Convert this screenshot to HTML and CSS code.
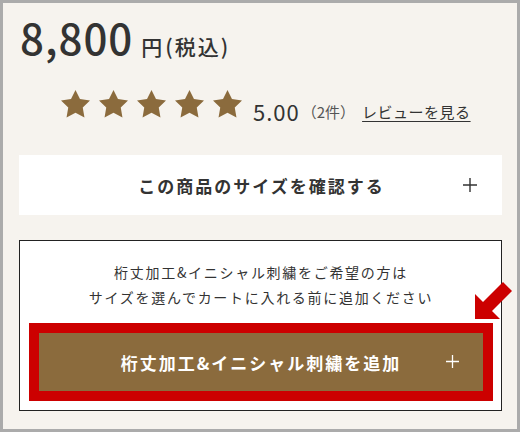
FILE: index.html
```html
<!DOCTYPE html>
<html lang="ja">
<head>
<meta charset="utf-8">
<link rel="stylesheet" href="styles.css">
</head>
<body>
<div class="frame">
  <div class="price">
    <span class="amount">8,800</span><span class="yen">円</span><span class="tax">(税込)</span>
  </div>
  <div class="rating">
    <div class="stars">
      <svg class="star" viewBox="2 2 20 19.3"><path d="M12 2l3.09 6.26L22 9.27l-5 4.87 1.18 6.88L12 17.77l-6.18 3.25L7 14.14 2 9.27l6.91-1.01L12 2z"/></svg>
      <svg class="star" viewBox="2 2 20 19.3"><path d="M12 2l3.09 6.26L22 9.27l-5 4.87 1.18 6.88L12 17.77l-6.18 3.25L7 14.14 2 9.27l6.91-1.01L12 2z"/></svg>
      <svg class="star" viewBox="2 2 20 19.3"><path d="M12 2l3.09 6.26L22 9.27l-5 4.87 1.18 6.88L12 17.77l-6.18 3.25L7 14.14 2 9.27l6.91-1.01L12 2z"/></svg>
      <svg class="star" viewBox="2 2 20 19.3"><path d="M12 2l3.09 6.26L22 9.27l-5 4.87 1.18 6.88L12 17.77l-6.18 3.25L7 14.14 2 9.27l6.91-1.01L12 2z"/></svg>
      <svg class="star" viewBox="2 2 20 19.3"><path d="M12 2l3.09 6.26L22 9.27l-5 4.87 1.18 6.88L12 17.77l-6.18 3.25L7 14.14 2 9.27l6.91-1.01L12 2z"/></svg>
    </div>
    <span class="score">5.00</span><span class="count">（2件）</span><a class="review" href="#">レビューを見る</a>
  </div>
  <div class="size-btn">
    <span class="size-label">この商品のサイズを確認する</span>
    <svg class="plus" viewBox="0 0 14 14"><path d="M7 0V14M0 7H14"/></svg>
  </div>
  <div class="custom">
    <p class="note">桁丈加工&amp;イニシャル刺繍をご希望の方は<br>サイズを選んでカートに入れる前に追加ください</p>
    <div class="highlight">
      <div class="add-btn">
        <span class="add-label">桁丈加工&amp;イニシャル刺繍を追加</span>
        <svg class="plus plus-white" viewBox="0 0 14 14"><path d="M7 0V14M0 7H14"/></svg>
      </div>
    </div>
    <svg class="arrow" viewBox="0 0 44 42"><polygon points="3,38 3,13 11,21 31,1 40,10 20,30 28,38"/></svg>
  </div>
</div>
</body>
</html>
```

FILE: styles.css
```css
body {
  margin: 0;
}

.frame {
  width: 520px;
  height: 432px;
  box-sizing: border-box;
  border: 3px solid #ababab;
  background: #f6f3ee;
  padding: 0 15px 0 16px;
  font-family: "Noto Sans CJK JP", sans-serif;
  color: #333;
}

.price {
  display: flex;
  align-items: baseline;
  padding-top: 13px;
  height: 42px;
  line-height: 42px;
}

.amount {
  font-size: 42px;
  font-weight: 500;
  letter-spacing: 1px;
  margin-left: 1px;
}

.yen {
  font-size: 21px;
  font-weight: 500;
  margin-left: 8px;
}

.tax {
  font-size: 21px;
  font-weight: 500;
  margin-left: 3px;
  letter-spacing: 2px;
}

.rating {
  display: flex;
  align-items: flex-end;
  margin-top: 33px;
  padding-left: 42px;
  height: 31px;
}

.stars {
  display: flex;
  gap: 9px;
  margin-bottom: 4px;
}

.star {
  width: 29px;
  height: 28px;
  fill: #8b6b3d;
  display: block;
}

.score {
  font-size: 22px;
  line-height: 22px;
  margin-left: 11px;
  letter-spacing: 1px;
}

.count {
  font-size: 15px;
  line-height: 20px;
  color: #555;
  margin-left: 2px;
}

.review {
  font-size: 15px;
  line-height: 20px;
  color: #333;
  margin-left: 7px;
  letter-spacing: 0.5px;
  text-decoration: underline;
  text-underline-offset: 3px;
}

.size-btn {
  position: relative;
  margin-top: 33px;
  height: 60px;
  background: #fff;
  display: flex;
  align-items: center;
  justify-content: center;
}

.size-label {
  font-size: 17px;
  font-weight: 700;
  letter-spacing: 2px;
  margin-left: 2px;
}

.plus {
  position: absolute;
  right: 25px;
  top: 23px;
  width: 14px;
  height: 14px;
  stroke: #333;
  stroke-width: 1.4;
  fill: none;
}

.custom {
  position: relative;
  margin-top: 25px;
  height: 171px;
  box-sizing: border-box;
  border: 1px solid #222;
  background: #fff;
  padding: 19px 8px 9px 9px;
}

.note {
  margin: 0;
  font-size: 14px;
  line-height: 25px;
  letter-spacing: 1.7px;
  text-align: center;
}

.highlight {
  margin-top: 13px;
  border: 10px solid #cc0000;
}

.add-btn {
  position: relative;
  height: 58px;
  background: #8b6b3d;
  display: flex;
  align-items: center;
  justify-content: center;
  color: #fff;
}

.add-label {
  font-size: 17px;
  font-weight: 700;
  letter-spacing: 2px;
}

.plus-white {
  right: 24px;
  top: 22px;
  width: 13px;
  height: 13px;
  stroke: #fff;
}

.arrow {
  position: absolute;
  left: 452px;
  top: 40px;
  width: 44px;
  height: 42px;
  fill: #cc0000;
}
```
